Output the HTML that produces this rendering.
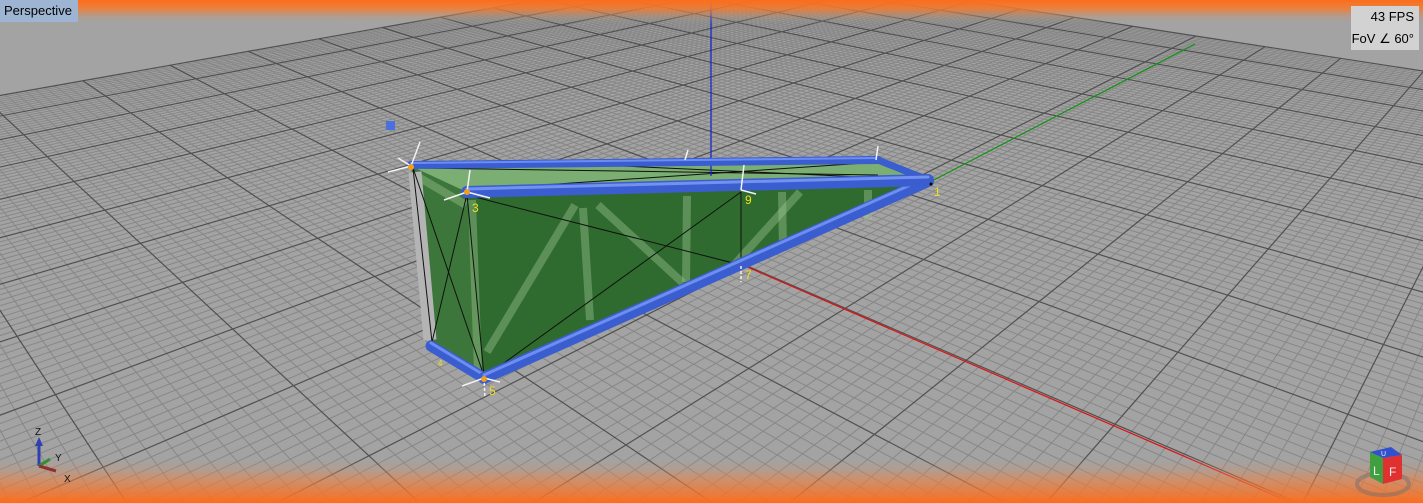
<!DOCTYPE html>
<html><head><meta charset="utf-8">
<style>
html,body{margin:0;padding:0;width:1423px;height:503px;overflow:hidden;background:#a3a3a3;font-family:"Liberation Sans",sans-serif}
#v{position:absolute;left:0;top:0}
.lbl{position:absolute;left:0;top:0;width:78px;height:22px;background:#9db4d2;color:#000;font-size:13px;line-height:22px;padding-left:4px;box-sizing:border-box}
.fps{position:absolute;right:4px;top:6px;width:68px;height:44px;background:#d2d2d2;color:#000;font-size:13px;text-align:right;box-sizing:border-box;padding-right:5px;line-height:22px;white-space:nowrap}
</style></head><body>
<svg id="v" width="1423" height="503" viewBox="0 0 1423 503">
<defs>
<linearGradient id="tg" x1="0" y1="0" x2="0" y2="1"><stop offset="0" stop-color="#fb6d1c" stop-opacity="1"/><stop offset="0.35" stop-color="#f87a2c" stop-opacity="0.85"/><stop offset="1" stop-color="#a3a3a3" stop-opacity="0"/></linearGradient>
<linearGradient id="bg" x1="0" y1="0" x2="0" y2="1"><stop offset="0" stop-color="#a3a3a3" stop-opacity="0"/><stop offset="0.5" stop-color="#f08040" stop-opacity="0.55"/><stop offset="1" stop-color="#fb6d1c" stop-opacity="1"/></linearGradient>
</defs>
<g id="grid"></g>
<polygon points="0,0 0,90 420,4 420,0" fill="#a3a3a3"/>
<line x1="745" y1="266" x2="1292" y2="503" stroke="#e01010" stroke-width="1.2"/>
<line x1="930" y1="182" x2="1195" y2="44" stroke="#109010" stroke-width="1.2"/>
<!-- shape -->
<polygon points="411,166 431,344 484,378 467,192" fill="#3d763a"/>
<polygon points="411,166 878,160 928,180 467,192" fill="#7aae72"/>
<polygon points="467,192 928,180 484,378" fill="#2f6b2f"/>
<line x1="415" y1="172" x2="430" y2="340" stroke="#b4b4b4" stroke-width="13"/>
<g stroke="rgba(160,200,150,0.4)" stroke-width="8" fill="none">
<line x1="575" y1="205" x2="487" y2="352"/>
<line x1="583" y1="208" x2="590" y2="320"/>
<line x1="598" y1="205" x2="683" y2="283"/>
<line x1="687" y1="196" x2="686" y2="282"/>
<line x1="782" y1="192" x2="783" y2="250"/>
<line x1="800" y1="192" x2="725" y2="275"/>
<line x1="868" y1="190" x2="868" y2="220"/>
<line x1="472" y1="200" x2="478" y2="372"/>
<line x1="420" y1="178" x2="466" y2="205"/>
</g>
<g stroke="#101010" stroke-width="1" fill="none">
<line x1="467" y1="195" x2="741" y2="265"/>
<line x1="741" y1="192" x2="486" y2="376"/>
<line x1="741" y1="192" x2="741" y2="262"/>
<line x1="413" y1="168" x2="484" y2="376"/>
<line x1="467" y1="194" x2="432" y2="342"/>
<line x1="467" y1="194" x2="484" y2="376"/>
<line x1="413" y1="168" x2="432" y2="342"/>
<line x1="420" y1="168" x2="878" y2="175"/>
<line x1="470" y1="190" x2="880" y2="162"/>
<line x1="600" y1="165" x2="928" y2="180"/>
</g>
<line x1="711" y1="0" x2="711" y2="176" stroke="#1020d0" stroke-width="1.2"/>
<g stroke-linecap="round" fill="none">
<line x1="411" y1="165" x2="878" y2="160" stroke="#3a5dd0" stroke-width="8"/>
<line x1="411" y1="163" x2="878" y2="158" stroke="#6d8ef0" stroke-width="2"/>
<line x1="878" y1="160" x2="928" y2="180" stroke="#3a5dd0" stroke-width="7"/>
<line x1="431" y1="346" x2="484" y2="378" stroke="#3a5dd0" stroke-width="11"/>
<line x1="431" y1="343" x2="484" y2="375" stroke="#6d8ef0" stroke-width="3"/>
<line x1="484" y1="378" x2="928" y2="181" stroke="#3a5dd0" stroke-width="12"/>
<line x1="484" y1="375" x2="926" y2="178" stroke="#6d8ef0" stroke-width="3"/>
<line x1="467" y1="192" x2="928" y2="180" stroke="#3a5dd0" stroke-width="12"/>
<line x1="467" y1="189" x2="928" y2="177" stroke="#7392f0" stroke-width="3"/>
</g>
<g stroke="#f4f4f4" stroke-width="1.5">
<line x1="411" y1="166" x2="420" y2="142"/><line x1="411" y1="166" x2="388" y2="172"/><line x1="411" y1="166" x2="398" y2="158"/>
<line x1="467" y1="192" x2="470" y2="170"/><line x1="467" y1="192" x2="444" y2="200"/><line x1="467" y1="192" x2="490" y2="198"/>
<line x1="741" y1="190" x2="744" y2="165"/><line x1="741" y1="190" x2="756" y2="194"/>
<line x1="741" y1="266" x2="741" y2="282" stroke-dasharray="3,2"/>
<line x1="484" y1="378" x2="462" y2="386"/><line x1="484" y1="378" x2="500" y2="382"/><line x1="484" y1="378" x2="485" y2="398" stroke-dasharray="3,2"/>
<line x1="876" y1="160" x2="878" y2="146"/><line x1="685" y1="160" x2="688" y2="150"/>
</g>
<circle cx="411" cy="167" r="3" fill="#f0a020"/>
<circle cx="467" cy="192" r="3" fill="#f0a020"/>
<circle cx="484" cy="379" r="3" fill="#f0a020"/>
<circle cx="931" cy="184" r="1.5" fill="#000"/>
<g fill="#f0e020" font-family="Liberation Sans" font-size="12">
<text x="472" y="212">3</text><text x="745" y="204">9</text><text x="745" y="279">7</text><text x="489" y="395">5</text><text x="934" y="196">1</text><text x="438" y="366" font-size="8">4</text>
</g>
<rect x="386" y="121" width="9" height="9" fill="#4a70e0"/>
<rect x="0" y="0" width="1423" height="24" fill="url(#tg)"/>
<rect x="0" y="455" width="1423" height="48" fill="url(#bg)"/>
<line x1="39" y1="466" x2="39" y2="443" stroke="#3040b0" stroke-width="3"/>
<polygon points="35,446 43,446 39,437" fill="#3040b0"/>
<line x1="39" y1="466" x2="50" y2="459" stroke="#309030" stroke-width="3"/>
<line x1="39" y1="466" x2="56" y2="471" stroke="#903030" stroke-width="3"/>
<g font-family="Liberation Sans" font-size="10" fill="#111">
<text x="35" y="435">Z</text><text x="55" y="461">Y</text><text x="64" y="482">X</text></g>
<ellipse cx="1383" cy="484" rx="26" ry="11" fill="none" stroke="rgba(120,110,110,0.5)" stroke-width="4"/>
<polygon points="1370,452 1391,447 1402,455 1383,458" fill="#3050d0"/>
<polygon points="1370,452 1383,458 1383,484 1370,477" fill="#40a040"/>
<polygon points="1383,458 1402,455 1402,479 1383,484" fill="#e03030"/>
<g font-family="Liberation Sans" font-size="12" fill="#eee"><text x="1373" y="475">L</text><text x="1389" y="476">F</text><text x="1381" y="456" font-size="7">U</text></g>
</svg>
<div class="lbl">Perspective</div>
<div class="fps">43 FPS<br>FoV ∠ 60°</div>
<script>
(function(){
var O=[745,265],Vx=[-336,-200],Vy=[1661,-200],kx=-0.0085,ky=0.0097,N=100;
function P(u,v){var w=1+u*kx+v*ky;return [(O[0]+u*kx*Vx[0]+v*ky*Vy[0])/w,(O[1]+u*kx*Vx[1]+v*ky*Vy[1])/w];}
var minor='',major='',eps=0.04;
function seg(fu,a,b){
 var p=fu(a),q=fu(b);
 var wa=1+p[0]*kx+p[1]*ky,wb=1+q[0]*kx+q[1]*ky;
 if(wa<eps&&wb<eps)return '';
 if(wa<eps){a=a+(b-a)*(eps-wa)/(wb-wa);}
 else if(wb<eps){b=a+(b-a)*(eps-wa)/(wb-wa);}
 var s=P.apply(null,fu(a)),e=P.apply(null,fu(b));
 return '<line x1="'+s[0].toFixed(1)+'" y1="'+s[1].toFixed(1)+'" x2="'+e[0].toFixed(1)+'" y2="'+e[1].toFixed(1)+'"/>';
}
for(var i=-N;i<=N;i++){
 var l1=seg(function(t){return [i,t];},-N,N);
 var l2=seg(function(t){return [t,i];},-N,N);
 if(i%10==0){major+=l1+l2;}else{minor+=l1+l2;}
}
document.getElementById('grid').innerHTML='<g stroke="#878787" stroke-width="1">'+minor+'</g><g stroke="#505050" stroke-width="1.2">'+major+'</g>';
})();
</script>
</body></html>
